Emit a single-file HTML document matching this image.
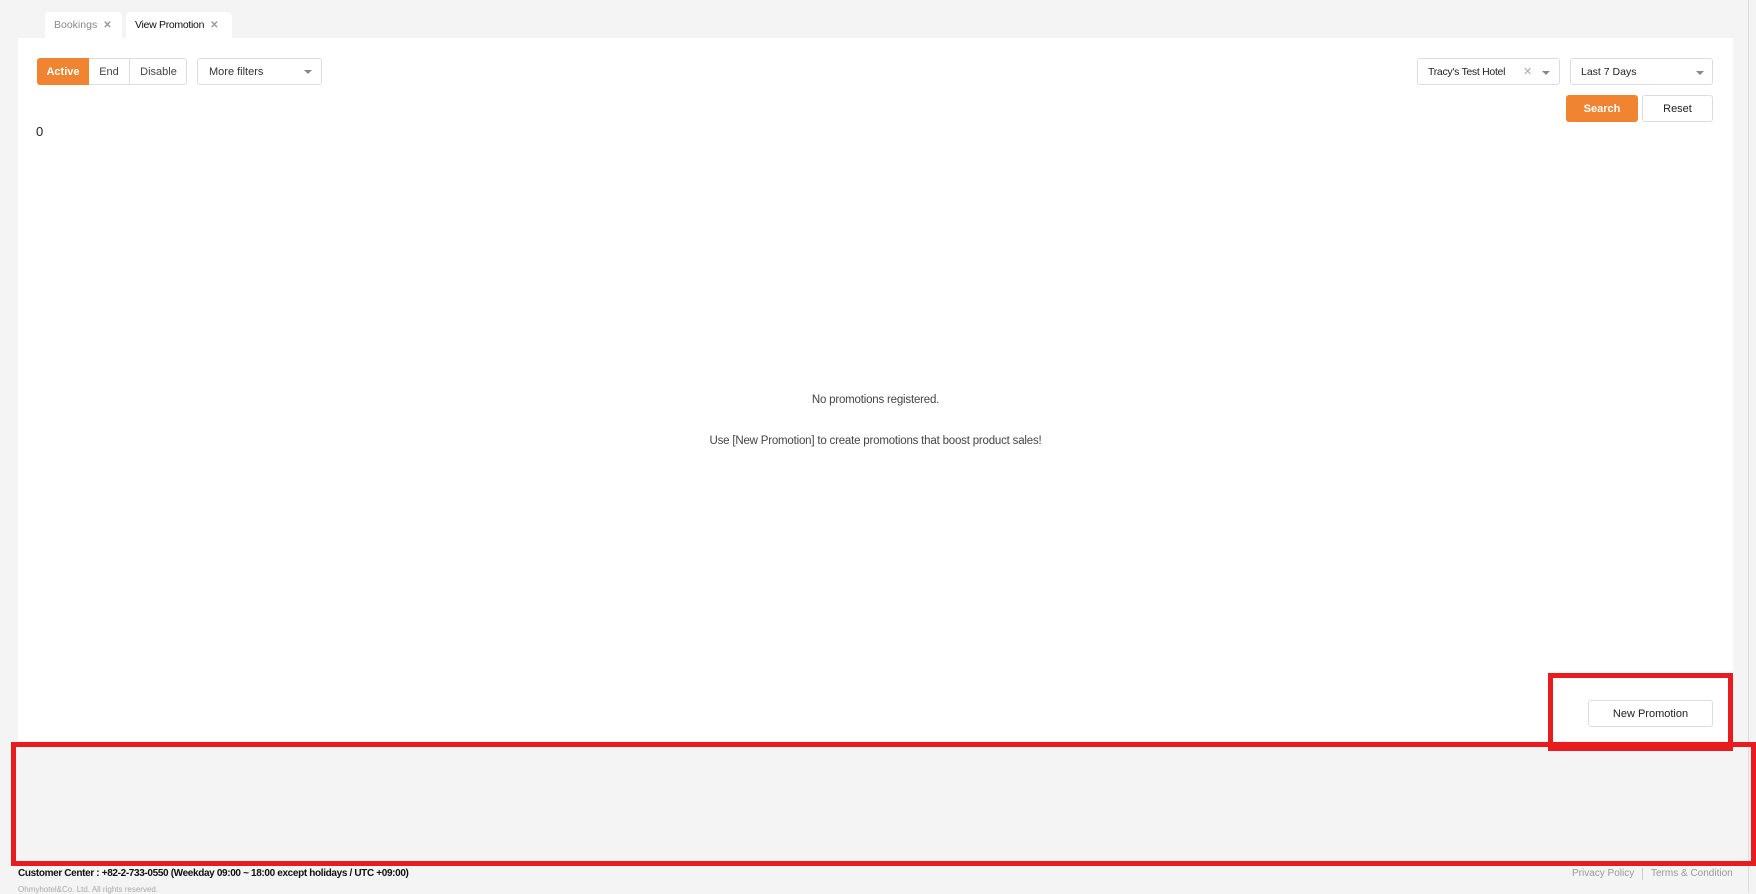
<!DOCTYPE html>
<html><head><meta charset="utf-8"><style>
*{box-sizing:border-box;margin:0;padding:0}
body{width:1756px;height:893px;background:#f4f4f4;font-family:"Liberation Sans",sans-serif;position:relative;overflow:hidden;color:#222}
.a{position:absolute}
.tab{position:absolute;top:12px;height:27px;background:#fff;border-radius:4px 4px 0 0;font-size:10.5px;line-height:27px;padding-left:9px}
.x{color:#999;font-size:10px;margin-left:6px;font-weight:bold}
.panel{left:18px;top:38px;width:1715px;height:703px;background:#fff}
.btn{position:absolute;border:1px solid #ddd;border-radius:3px;font-size:11px;text-align:center;background:#fff}
.caret{position:absolute;width:0;height:0;border-left:4px solid transparent;border-right:4px solid transparent;border-top:4px solid #888}
.red{position:absolute;border:5px solid #e81c1f}
</style></head><body>
<div class="tab" style="left:45px;width:77px;color:#888">Bookings<span class="x">✕</span></div>
<div class="tab" style="left:126px;width:106px;color:#111;letter-spacing:-0.3px">View Promotion<span class="x">✕</span></div>
<div class="a panel"></div>
<div class="a" style="left:1748px;top:0;width:1px;height:893px;background:#ddd"></div>

<div class="btn" style="left:37px;top:58px;width:150px;height:27px"></div>
<div class="a" style="left:37px;top:58px;width:52px;height:27px;background:#f08430;border-radius:3px 0 0 3px;color:#fff;font-size:11px;font-weight:bold;line-height:28px;text-align:center">Active</div>
<div class="a" style="left:89px;top:58px;width:40px;height:27px;line-height:28px;font-size:11px;text-align:center;color:#444">End</div>
<div class="a" style="left:129px;top:58px;width:1px;height:27px;background:#ddd"></div>
<div class="a" style="left:130px;top:58px;width:57px;height:27px;line-height:28px;font-size:11px;text-align:center;color:#444">Disable</div>

<div class="btn" style="left:197px;top:58px;width:125px;height:27px;line-height:26px;text-align:left;padding-left:11px;color:#333">More filters</div>
<div class="caret" style="left:304px;top:70px"></div>

<div class="btn" style="left:1417px;top:58px;width:143px;height:27px;line-height:26px;text-align:left;padding-left:10px;color:#222;font-size:10.5px;letter-spacing:-0.3px">Tracy's Test Hotel</div>
<div class="a" style="left:1523px;top:65px;font-size:11px;color:#aaa">✕</div>
<div class="caret" style="left:1542px;top:71px"></div>
<div class="btn" style="left:1570px;top:58px;width:143px;height:27px;line-height:26px;text-align:left;padding-left:10px;color:#222;font-size:10.5px">Last 7 Days</div>
<div class="caret" style="left:1696px;top:71px"></div>

<div class="a" style="left:1566px;top:95px;width:72px;height:27px;background:#f08430;border-radius:3px;color:#fff;font-size:11px;font-weight:bold;line-height:28px;text-align:center">Search</div>
<div class="btn" style="left:1642px;top:95px;width:71px;height:27px;line-height:26px;color:#222">Reset</div>

<div class="a" style="left:36px;top:124px;font-size:13px">0</div>

<div class="a" style="left:18px;width:1715px;top:394px;text-align:center;font-size:11.5px;color:#444;letter-spacing:-0.2px">No promotions registered.</div>
<div class="a" style="left:18px;width:1715px;top:435px;text-align:center;font-size:11.5px;color:#444;letter-spacing:-0.2px">Use [New Promotion] to create promotions that boost product sales!</div>

<div class="btn" style="left:1588px;top:700px;width:125px;height:27px;line-height:26px;color:#222">New Promotion</div>

<div class="red" style="left:1548px;top:673px;width:185px;height:78px"></div>
<div class="red" style="left:11px;top:742px;width:1745px;height:124px"></div>

<div class="a" style="left:18px;top:868px;font-size:10px;font-weight:bold;color:#111;letter-spacing:-0.35px">Customer Center : +82-2-733-0550 (Weekday 09:00 ~ 18:00 except holidays / UTC +09:00)</div>
<div class="a" style="left:18px;top:885px;font-size:8px;color:#aaa">Ohmyhotel&amp;Co. Ltd. All rights reserved.</div>
<div class="a" style="left:1572px;top:868px;font-size:10px;color:#999">Privacy Policy</div>
<div class="a" style="left:1642px;top:868px;width:1px;height:12px;background:#ccc"></div>
<div class="a" style="left:1651px;top:868px;font-size:10px;color:#999">Terms &amp; Condition</div>
</body></html>
